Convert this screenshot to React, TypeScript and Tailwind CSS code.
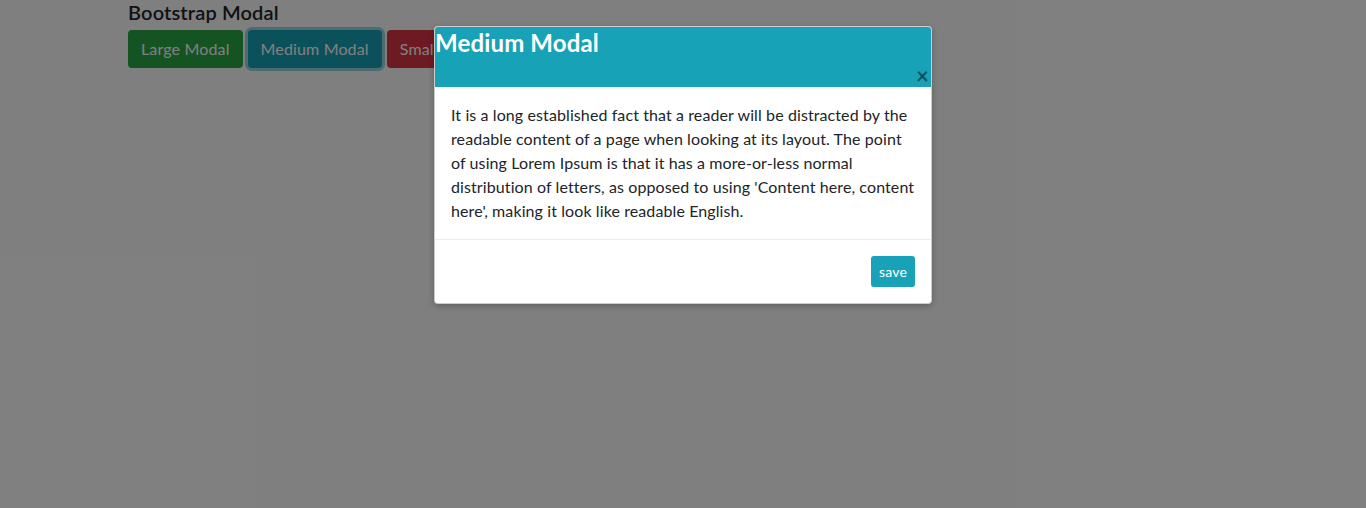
import React from 'react';

const font = { fontFamily: 'Lato, "Noto Sans", sans-serif' };

export default function App() {
  return (
    <div className="relative h-[508px] w-full overflow-hidden bg-white tracking-[0.15px] text-[#212529]" style={font}>
      {/* Page */}
      <div className="pl-32">
        <h3 className="text-[20px] font-semibold leading-[24px]">Bootstrap Modal</h3>
        <div className="mt-[6px] flex gap-[5px]">
          <button className="h-[38px] rounded-[4px] bg-[#28a745] px-[13px] text-[16px] text-white">Large Modal</button>
          <button className="h-[38px] rounded-[4px] bg-[#17a2b8] px-[13px] text-[16px] text-white shadow-[0_0_0_3px_rgba(58,176,195,0.5)]">Medium Modal</button>
          <button className="h-[38px] rounded-[4px] bg-[#dc3545] px-[13px] text-[16px] text-white">Small Modal</button>
        </div>
      </div>

      {/* Backdrop */}
      <div className="absolute inset-0 bg-black/50" />

      {/* Modal */}
      <div className="absolute left-[434px] top-[26px] w-[498px] overflow-hidden rounded-[4px] border border-black/20 bg-white shadow-[0_2px_6px_rgba(0,0,0,0.25)]">
        <div className="relative h-[60px] bg-[#17a2b8]">
          <h4 className="pt-[2px] text-[24px] font-bold leading-[28px] text-white">Medium Modal</h4>
          <button className="absolute bottom-[0px] right-[2px] text-[22px] font-bold leading-[22px] text-black/50">×</button>
        </div>
        <div className="border-b border-[#e9ecef] px-[16px] py-[16px] text-[16px] leading-[24px] tracking-[0.1px]">
          It is a long established fact that a reader will be distracted by the readable content of a page when looking at its layout. The point of using Lorem Ipsum is that it has a more-or-less normal distribution of letters, as opposed to using 'Content here, content here', making it look like readable English.
        </div>
        <div className="flex justify-end p-[16px]">
          <button className="h-[31px] rounded-[3px] bg-[#17a2b8] px-[8px] text-[14px] text-white">save</button>
        </div>
      </div>
    </div>
  );
}
